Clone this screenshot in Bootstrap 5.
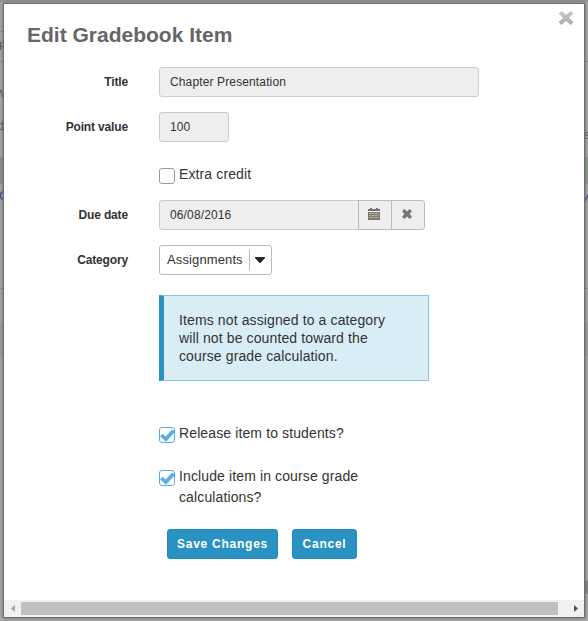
<!DOCTYPE html>
<html lang="en">
<head>
<meta charset="utf-8">
<meta name="viewport" content="width=device-width, initial-scale=1">
<title>Edit Gradebook Item</title>
<link href="https://cdn.jsdelivr.net/npm/bootstrap@5.3.0/dist/css/bootstrap.min.css" rel="stylesheet">
<style>
html,body{height:621px;overflow:hidden}
body{font-family:"Liberation Sans",Arial,sans-serif;font-size:14px;color:#333;background:#aaa}
.page-behind{inset:0}
.page-behind svg{display:block}
.dialog-frame{padding:4px}
.dialog-box{width:580px;height:613px;background:#fff;box-shadow:0 0 0 1px #6d6d6d,0 0 4px 1px #666}
.dialog-body{height:596px;padding:18px 14px 0 23px}
.dialog-close{right:10px;top:6px;width:16px;height:16px;border:0;padding:0;background:none;line-height:0}
h1{font-size:21px;line-height:26px;font-weight:700;color:#666;letter-spacing:0;margin:0 0 19px}
.form-line{margin-bottom:15px;min-height:30px}
.line-label{width:101px;margin-right:31px;text-align:right;font-weight:700;font-size:12px;letter-spacing:-.15px;line-height:30px}
.field{height:30px;padding:0 10px;font-size:12px;letter-spacing:.13px;line-height:28px;border:1px solid #ccc;border-radius:3px;background:#eee;color:#333}
.field:focus{box-shadow:none;background:#eee}
.w-title{width:320px}.w-points{width:70px}.w-date{width:266px}
.w-date .field{border-radius:3px 0 0 3px}
.addon{width:34px;height:30px;padding:0 2px 2px 0;border:1px solid #bbb;border-radius:0;background:#eee;margin-left:-1px;line-height:0}
.addon:last-child{border-radius:0 3px 3px 0}
.picker{width:113px;height:30px;border:1px solid #bbb;border-radius:3px;background:#fff;padding:0 0 0 7px;font-size:13px;letter-spacing:.12px;color:#333}
.picker-arrow{height:20px;width:22px;padding-right:2px;border-left:1px solid #bbb}
.check-line{margin-left:132px;width:230px;line-height:21px;letter-spacing:.12px}
.check-line input{appearance:none;flex:none;width:16px;height:16px;margin:4px 4px 0 0;border:1px solid #999;border-radius:3px;background:#fff}
.tick{flex:none;width:16px;height:16px;margin:4px 4px 0 0}
.extra{margin-top:22px;margin-bottom:15px}
.note{width:270px;height:86px;margin:20px 0 0 132px;padding:15px 20px 0 15px;border:1px solid #85c8e2;border-left:5px solid #2a92c2;border-radius:0;background:#d9edf7;line-height:18px;letter-spacing:.12px;color:#333}
.release{margin-top:42px}
.include{margin-top:22px}
.actions{margin:21px 0 0 140px;gap:14px}
.action{height:30px;padding:0 9px;border:1px solid #258dbd;border-radius:3px;background:#2a92c2;color:#fff;font-size:12px;font-weight:700;letter-spacing:.75px;line-height:28px}
.action-save{width:111px}.action-cancel{width:65px}
.scroll-track{height:17px;background:#f1f1f1}
.scroll-thumb{width:537px;height:13px;background:#c1c1c1}
.scroll-end{width:17px;line-height:0}
</style>
<script src="https://cdn.jsdelivr.net/npm/bootstrap@5.3.0/dist/js/bootstrap.bundle.min.js"></script>
</head>
<body>
<div class="page-behind position-absolute overflow-hidden">
<svg width="588" height="621" font-family="Liberation Sans, Arial, sans-serif" font-size="13">
<rect width="588" height="2" fill="#929292"/>
<rect y="157" width="588" height="27" fill="#929292"/>
<rect x="580" y="157" width="8" height="27" fill="#8f9a8b"/>
<path d="M0 31.5h6M0 61.5h588M0 288.5h588" stroke="#8b8b8b"/>
<rect y="323" width="588" height="33" fill="#a0a0a0"/>
<rect x="580" y="581" width="8" height="13" fill="#848484"/>
<g fill="#54506e"><text x="-1" y="50" font-size="11">F</text><text x="-4" y="97">w</text><text x="-3" y="130">d</text><text x="584" y="139">s</text></g>
<text x="-1" y="200" fill="#164a88">C</text><text x="582" y="201" fill="#25307d" font-style="italic">y</text>
</svg>
</div>
<main class="dialog-frame position-relative">
<div class="dialog-box position-relative d-flex flex-column">
<button class="dialog-close position-absolute" aria-label="Close"><svg width="16" height="16" viewBox="0 0 16 16"><defs><linearGradient id="cross" x1="0" y1="0" x2="0" y2="1"><stop stop-color="#ccc"/><stop offset="1" stop-color="#aaa"/></linearGradient></defs><path d="M3.4 1 8 4.7 12.6 1 15.6 3.6 11 7.8 15.6 12 12.6 15 8 11 3.4 15 .6 12 5 7.8.6 3.6Z" fill="url(#cross)"/></svg></button>
<form class="dialog-body">
<h1>Edit Gradebook Item</h1>
<div class="form-line d-flex"><label class="line-label" for="title">Title</label><input id="title" class="form-control field w-title" value="Chapter Presentation" readonly></div>
<div class="form-line d-flex"><label class="line-label" for="points">Point value</label><input id="points" class="form-control field w-points" value="100" readonly></div>
<label class="check-line extra d-flex"><input type="checkbox"><span>Extra credit</span></label>
<div class="form-line d-flex"><label class="line-label" for="due">Due date</label>
<div class="input-group w-date flex-nowrap"><input id="due" class="form-control field" value="06/08/2016" readonly>
<button type="button" class="addon btn d-flex align-items-center justify-content-center" aria-label="Pick date"><svg width="12" height="12" viewBox="0 0 12 12" shape-rendering="crispEdges"><path d="M0 1h2V0h2v1h4V0h2v1h2v2H0z" fill="#77706a"/><path d="M0 4h12v8H0z" fill="#77746f"/><path d="M1 5.5h10M1 7.5h10M1 9.5h10" stroke="#c9b58f"/><path d="M3.5 4v8M6.5 4v8M9.5 4v8" stroke="#8a8780"/></svg></button>
<button type="button" class="addon btn d-flex align-items-center justify-content-center" aria-label="Clear date"><svg width="10" height="10" viewBox="0 0 10 10"><path d="M2.3 0 5 2.5 7.7 0 10 2.3 7.5 5 10 7.7 7.7 10 5 7.5 2.3 10 0 7.7 2.5 5 0 2.3Z" fill="#757575"/></svg></button></div></div>
<div class="form-line d-flex mb-0"><span class="line-label">Category</span><button type="button" class="picker d-flex align-items-center justify-content-between"><span>Assignments</span><span class="picker-arrow d-flex align-items-center justify-content-center"><svg width="10" height="6" viewBox="0 0 10 6"><path d="M0 0h10v1L5.5 6h-1L0 1z" fill="#2b2525"/></svg></span></button></div>
<div class="note alert mb-0">Items not assigned to a category will not be counted toward the course grade calculation.</div>
<label class="check-line d-flex release"><svg class="tick" viewBox="0 0 16 16"><rect x=".5" y=".5" width="15" height="15" rx="2.5" fill="#fff" stroke="#5aade3"/><path d="M1 9.2 3.8 6.8 6.6 9.4 13.2 2.6 16 5 7 14.8z" fill="#5aade8"/></svg><span>Release item to students?</span></label>
<label class="check-line d-flex include"><svg class="tick" viewBox="0 0 16 16"><rect x=".5" y=".5" width="15" height="15" rx="2.5" fill="#fff" stroke="#5aade3"/><path d="M1 9.2 3.8 6.8 6.6 9.4 13.2 2.6 16 5 7 14.8z" fill="#5aade8"/></svg><span>Include item in course grade calculations?</span></label>
<div class="d-flex actions"><button type="button" class="btn action action-save text-nowrap">Save Changes</button><button type="button" class="btn action action-cancel">Cancel</button></div>
</form>
<div class="scroll-track d-flex align-items-center">
<span class="scroll-end d-flex justify-content-center"><svg width="4" height="7" viewBox="0 0 4 7"><path d="M4 0v7L0 3.5z" fill="#a3a3a3"/></svg></span><div class="scroll-thumb"></div><span class="scroll-end ms-auto d-flex justify-content-center"><svg width="4" height="7" viewBox="0 0 4 7"><path d="M0 0v7l4-3.5z" fill="#505050"/></svg></span>
</div>
</div>
</main>
</body>
</html>
